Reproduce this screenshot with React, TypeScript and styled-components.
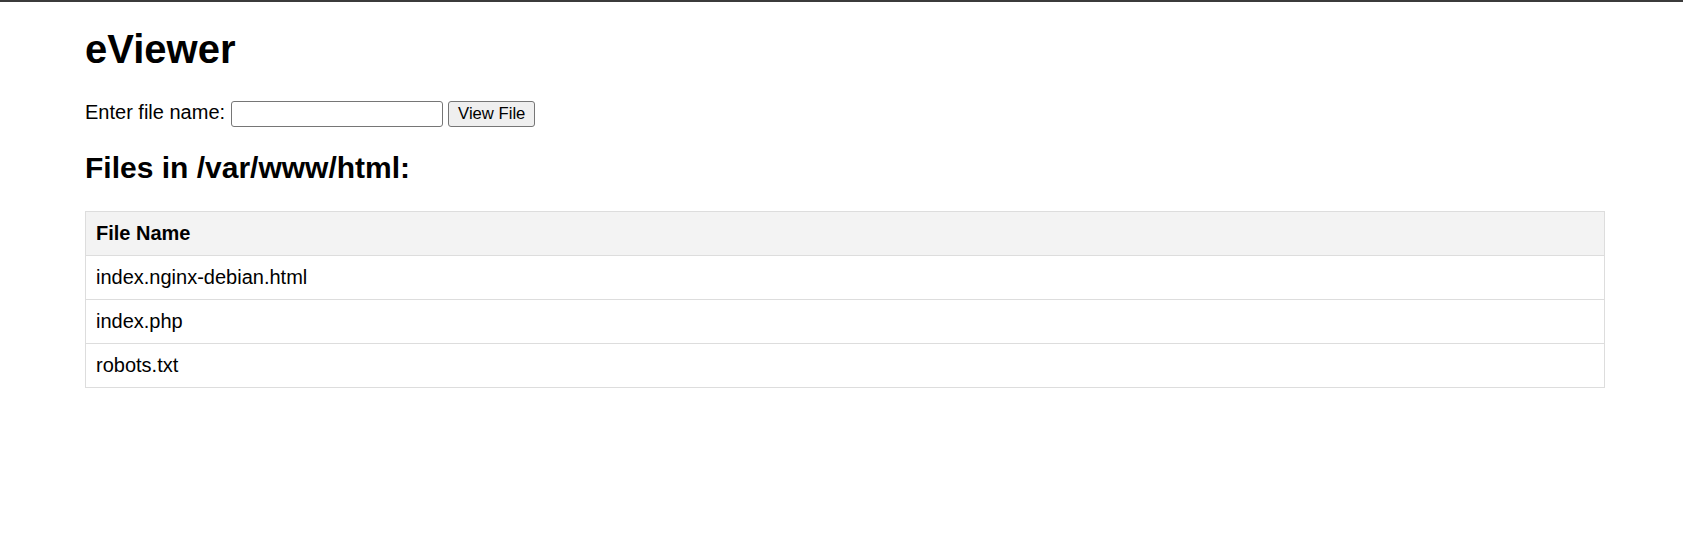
import React from "react";
import styled, { createGlobalStyle } from "styled-components";

const Global = createGlobalStyle`
  html, body { margin: 0; padding: 0; background: #ffffff; }
  body {
    font-family: "Liberation Sans", Arial, sans-serif;
    color: #000000;
    font-size: 20px;
  }
`;

const TopBar = styled.div`
  height: 2px;
  background: #3b3b3b;
`;

const Page = styled.main`
  padding: 0 78px 0 85px;
`;

const Title = styled.h1`
  font-size: 40px;
  font-weight: bold;
  margin: 25px 0 29px;
  line-height: normal;
`;

const FormRow = styled.form`
  display: flex;
  align-items: baseline;
  gap: 5px;
  font-size: 20px;
  line-height: 23px;
  margin: 0;
`;

const Label = styled.label`
  margin-right: 1px;
`;

const TextInput = styled.input`
  box-sizing: border-box;
  width: 212px;
  height: 26px;
  border: 1px solid #767676;
  border-radius: 3px;
  padding: 1px 3px;
  font-family: "Liberation Sans", Arial, sans-serif;
  font-size: 16.67px;
  background: #ffffff;
  margin: 0;
`;

const Button = styled.button`
  box-sizing: border-box;
  height: 26px;
  padding: 0 9px;
  border: 1px solid #767676;
  border-radius: 3px;
  background: #efefef;
  color: #000000;
  font-family: "Liberation Sans", Arial, sans-serif;
  font-size: 16.67px;
  cursor: pointer;
`;

const SubTitle = styled.h2`
  font-size: 30px;
  font-weight: bold;
  margin: 24px 0 26px;
  line-height: normal;
`;

const Table = styled.table`
  width: 100%;
  border-collapse: collapse;
`;

const HeadCell = styled.th`
  border: 1px solid #dddddd;
  background: #f3f3f3;
  padding: 10px;
  text-align: left;
  font-size: 20px;
  line-height: 23px;
  font-weight: bold;
`;

const Cell = styled.td`
  border: 1px solid #dddddd;
  padding: 10px;
  text-align: left;
  font-size: 20px;
  line-height: 23px;
`;

const files = ["index.nginx-debian.html", "index.php", "robots.txt"];

export default function App() {
  return (
    <>
      <Global />
      <TopBar />
      <Page>
        <Title>eViewer</Title>
        <FormRow onSubmit={(e) => e.preventDefault()}>
          <Label htmlFor="file">Enter file name:</Label>
          <TextInput id="file" type="text" name="file" />
          <Button type="submit">View File</Button>
        </FormRow>
        <SubTitle>Files in /var/www/html:</SubTitle>
        <Table>
          <thead>
            <tr>
              <HeadCell>File Name</HeadCell>
            </tr>
          </thead>
          <tbody>
            {files.map((f) => (
              <tr key={f}>
                <Cell>{f}</Cell>
              </tr>
            ))}
          </tbody>
        </Table>
      </Page>
    </>
  );
}
